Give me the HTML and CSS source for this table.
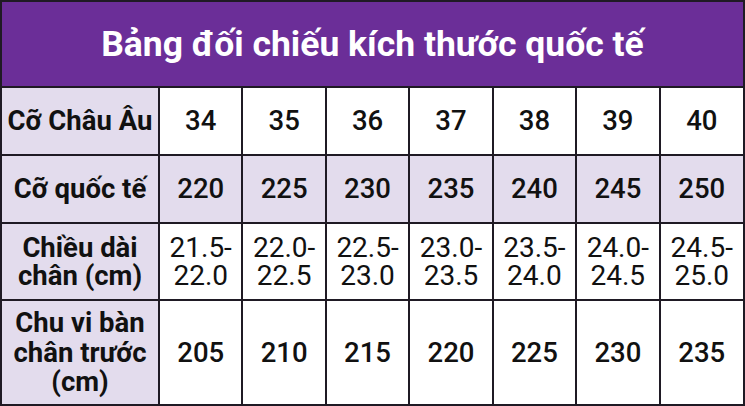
FILE: index.html
```html
<!DOCTYPE html>
<html lang="vi">
<head>
<meta charset="utf-8">
<title>Bảng đối chiếu kích thước quốc tế</title>
<link rel="stylesheet" href="styles.css">
</head>
<body>
<div class="chart">
  <div class="chart-title">Bảng đối chiếu kích thước quốc tế</div>
  <table class="size-table">
    <colgroup>
      <col class="col-label">
      <col span="7">
    </colgroup>
    <tbody>
      <tr class="row-1">
        <th>Cỡ Châu Âu</th>
        <td>34</td><td>35</td><td>36</td><td>37</td><td>38</td><td>39</td><td>40</td>
      </tr>
      <tr class="row-2 shaded">
        <th>Cỡ quốc tế</th>
        <td>220</td><td>225</td><td>230</td><td>235</td><td>240</td><td>245</td><td>250</td>
      </tr>
      <tr class="row-3">
        <th>Chiều dài<br>chân (cm)</th>
        <td>21.5-<br>22.0</td><td>22.0-<br>22.5</td><td>22.5-<br>23.0</td><td>23.0-<br>23.5</td><td>23.5-<br>24.0</td><td>24.0-<br>24.5</td><td>24.5-<br>25.0</td>
      </tr>
      <tr class="row-4">
        <th>Chu vi bàn<br>chân trước<br>(cm)</th>
        <td>205</td><td>210</td><td>215</td><td>220</td><td>225</td><td>230</td><td>235</td>
      </tr>
    </tbody>
  </table>
</div>
</body>
</html>
```

FILE: styles.css
```css
html, body {
  margin: 0;
  padding: 0;
  background: #ffffff;
}

.chart {
  width: 745px;
  height: 406px;
  box-sizing: border-box;
  border: 2px solid #1f1a24;
  display: flex;
  flex-direction: column;
  font-family: Roboto, "Noto Sans", "Liberation Sans", sans-serif;
  overflow: hidden;
}

.chart-title {
  height: 84px;
  flex: none;
  background: #6b2e98;
  color: #ffffff;
  font-weight: 700;
  font-size: 35.5px;
  display: flex;
  align-items: center;
  justify-content: center;
  border-bottom: 2px solid #1f1a24;
}

.size-table {
  width: 100%;
  flex: 1;
  border-collapse: collapse;
  border-style: hidden;
  table-layout: fixed;
  color: #111111;
  font-size: 27.5px;
}

.col-label {
  width: 157px;
}

.size-table th,
.size-table td {
  border: 2px solid #1f1a24;
  text-align: center;
  vertical-align: middle;
  padding: 0;
  line-height: 28px;
}

.size-table th {
  background: #e3dced;
  font-weight: 700;
  white-space: nowrap;
}

.size-table td {
  font-weight: 500;
  background: #ffffff;
}

.size-table tr.shaded td {
  background: #e3dced;
}

.row-1 { height: 67px; }
.row-2 { height: 68px; }
.row-3 { height: 77px; }
.row-4 { height: 104px; }

.row-3 td {
  font-weight: 400;
  font-size: 28px;
}

.row-4 th {
  line-height: 29.5px;
}
```
